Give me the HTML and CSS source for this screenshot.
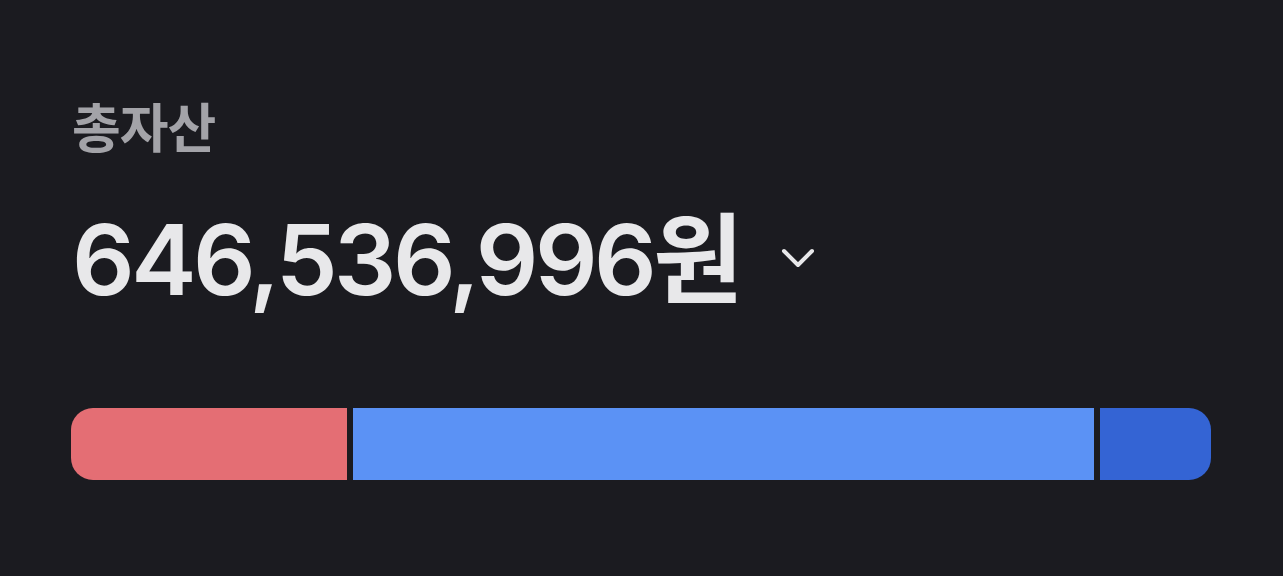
FILE: index.html
```html
<!DOCTYPE html>
<html lang="ko">
<head>
    <meta charset="UTF-8">
    <meta name="viewport" content="width=device-width, initial-scale=1.0">
    <title>총자산</title>
    <link rel="stylesheet" href="styles.css">
</head>
<body>
    <section class="summary">
        <h2 class="label">총자산</h2>
        <div class="total">
            <span class="amount">646,536,996원</span>
            <svg class="chevron" width="36" height="24" viewBox="0 0 36 24">
                <path d="M4 5 L18 19 L32 5" fill="none" stroke="#e8e8ea" stroke-width="4" stroke-linecap="round" stroke-linejoin="round"/>
            </svg>
        </div>
        <div class="bar">
            <div class="seg seg-red" style="width: 276px"></div>
            <div class="seg seg-blue" style="width: 741px"></div>
            <div class="seg seg-navy" style="width: 111px"></div>
        </div>
    </section>
</body>
</html>
```

FILE: styles.css
```css
body {
    margin: 0;
    padding: 0;
    background-color: #1b1b20;
    font-family: 'Inter', 'Noto Sans CJK KR', sans-serif;
    color: #e8e8ea;
}
.summary {
    padding: 94px 72px 0 72px;
}
.label {
    margin: 0;
    font-family: 'Noto Sans CJK KR', sans-serif;
    font-size: 53px;
    font-weight: 700;
    line-height: 62px;
    color: #a3a3a8;
    letter-spacing: -1px;
}
.total {
    display: flex;
    align-items: center;
    margin-top: 56px;
    height: 96px;
}
.amount {
    font-size: 98px;
    font-weight: 600;
    letter-spacing: -3.5px;
    line-height: 96px;
}
.chevron {
    margin-left: 40px;
    margin-top: -4px;
}
.bar {
    display: flex;
    gap: 6px;
    margin-top: 100px;
    margin-left: -1px;
    width: 1140px;
    height: 72px;
    border-radius: 22px;
    overflow: hidden;
}
.seg {
    height: 100%;
}
.seg-red {
    background-color: #e46e74;
}
.seg-blue {
    background-color: #5b92f5;
}
.seg-navy {
    background-color: #3464d4;
}
```
